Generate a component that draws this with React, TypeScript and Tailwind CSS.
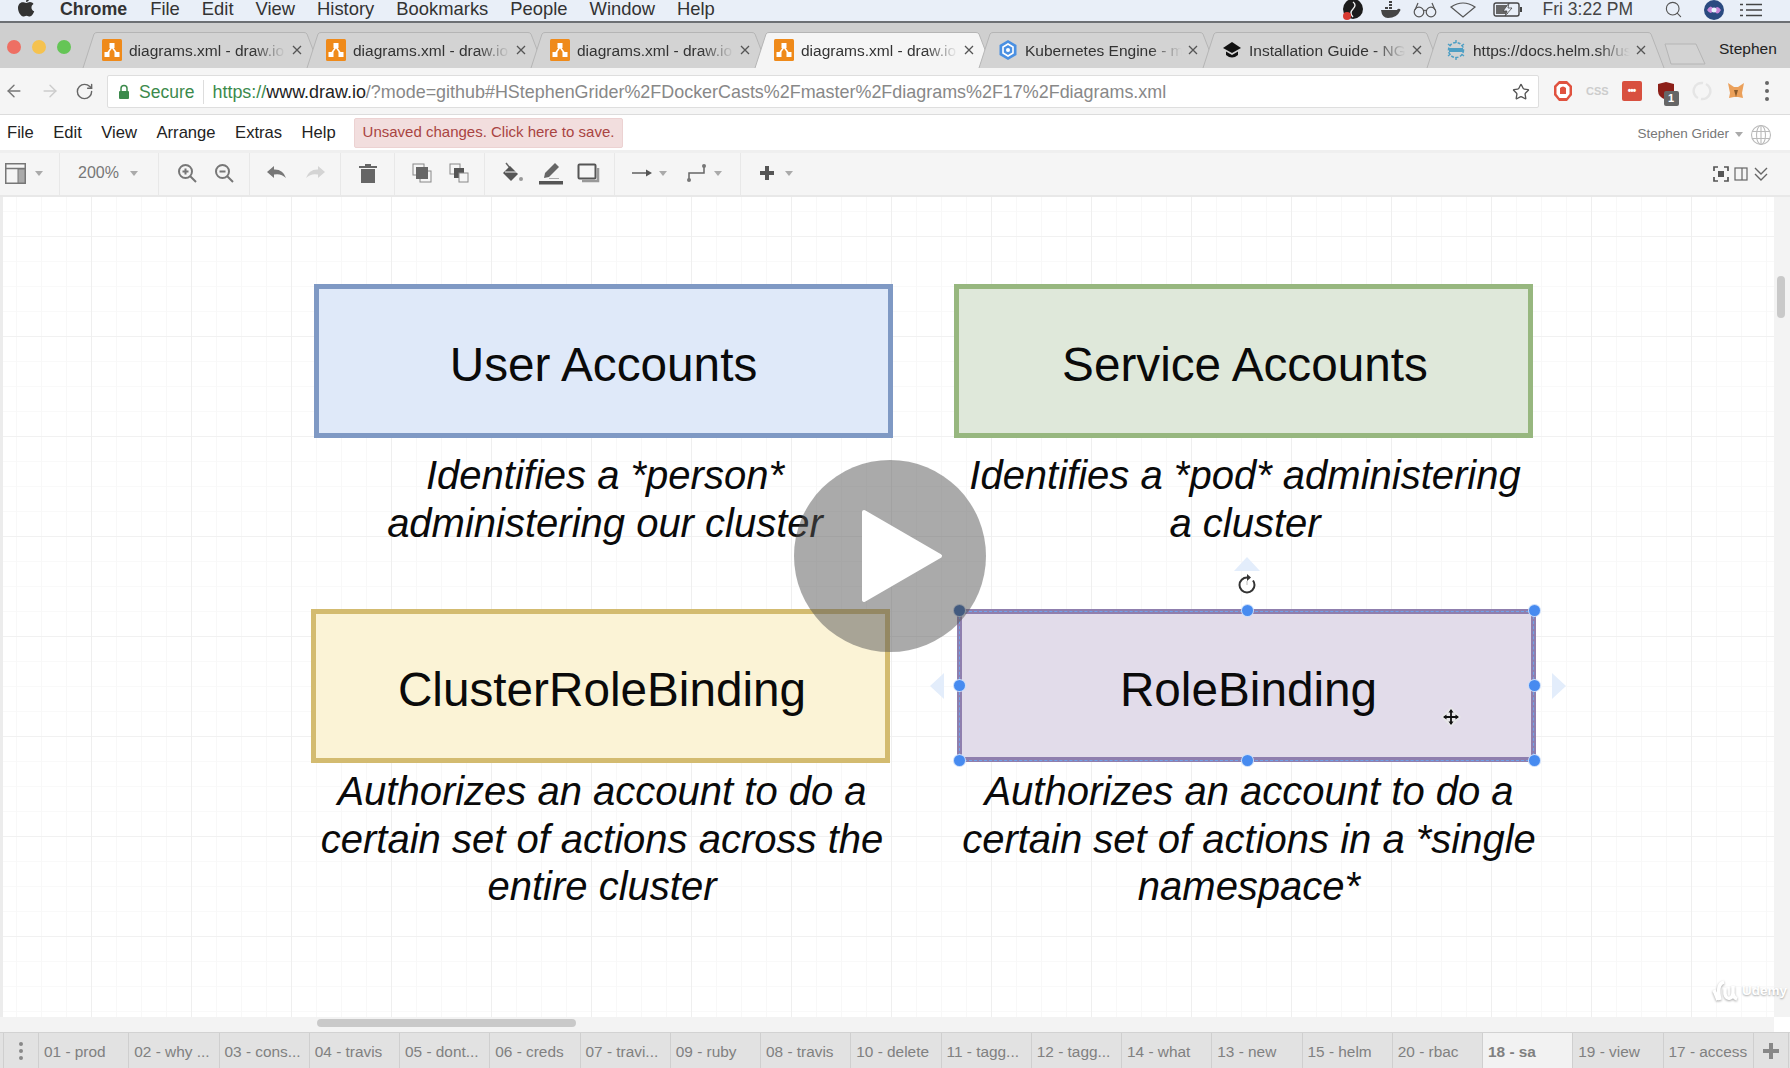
import { ArrowLeft, ArrowRight, RotateCw, Star, Search } from "lucide-react";

const macMenu = ["File", "Edit", "View", "History", "Bookmarks", "People", "Window", "Help"];
const appMenu = ["File", "Edit", "View", "Arrange", "Extras", "Help"];
const pages = [
    "01 - prod", "02 - why ...", "03 - cons...", "04 - travis", "05 - dont...", "06 - creds", "07 - travi...",
    "09 - ruby", "08 - travis", "10 - delete", "11 - tagg...", "12 - tagg...", "14 - what", "13 - new",
    "15 - helm", "20 - rbac", "18 - sa", "19 - view", "17 - access",
];

function DrawioIcon() {
    return (
        <svg width="20" height="22" viewBox="0 0 20 22" className="shrink-0">
            <rect width="20" height="22" rx="1.5" fill="#ef8a1a" />
            <path d="M10 8 L5 15 M10 8 L15 15" stroke="#fff" strokeWidth="1.5" />
            <rect x="7.5" y="4" width="5" height="5" fill="#fff" />
            <rect x="2.5" y="13" width="5" height="5" fill="#fff" />
            <rect x="12.5" y="13" width="5" height="5" fill="#fff" />
        </svg>
    );
}

function KubeIcon() {
    return (
        <svg width="20" height="22" viewBox="0 0 20 22" className="shrink-0">
            <path d="M10 1 L18.5 6 V16 L10 21 L1.5 16 V6 Z" fill="#4a90e2" />
            <path d="M10 5 L15 8 V14 L10 17 L5 14 V8 Z" fill="none" stroke="#fff" strokeWidth="1.6" />
            <circle cx="10" cy="11" r="2" fill="#fff" />
        </svg>
    );
}

function CapIcon() {
    return (
        <svg width="20" height="22" viewBox="0 0 20 22" className="shrink-0">
            <path d="M10 3 L19 9 L10 14 L1 9 Z" fill="#111" />
            <path d="M4 12.5 V16 Q10 21 16 16 V12.5 L10 16 Z" fill="#111" />
        </svg>
    );
}

function HelmIcon() {
    return (
        <svg width="20" height="22" viewBox="0 0 20 22" className="shrink-0">
            <circle cx="10" cy="11" r="7.5" fill="none" stroke="#4f9fc4" strokeWidth="1.5" strokeDasharray="3 1.6" />
            <path d="M10 1 V4 M10 18 V21 M2 5 L4.5 7 M18 5 L15.5 7 M2 17 L4.5 15 M18 17 L15.5 15" stroke="#4f9fc4" strokeWidth="1.4" />
            <rect x="3" y="9" width="14" height="4" fill="#4f9fc4" />
        </svg>
    );
}

function BrowserTab({ icon, title, active }: { icon: React.ReactNode; title: string; active?: boolean }) {
    return (
        <div className="relative flex h-[36px] w-[224px] shrink-0 items-center pl-[14px]">
            <svg width="250" height="36" viewBox="0 0 250 36" className="absolute left-[-6px] top-0">
                <path
                    d="M1 36 L12 2 Q13 0.5 15 0.5 H222 Q224 0.5 225 2 L238 36"
                    fill={active ? "#f5f5f5" : "#d3d3d3"}
                    stroke="#b5b5b5"
                />
            </svg>
            <div className="relative flex items-center gap-[7px]">
                {icon}
                <span className="relative top-[1px] w-[160px] overflow-hidden whitespace-nowrap text-[15.5px] text-[#333] [mask-image:linear-gradient(to_right,black_78%,transparent_98%)]">
                    {title}
                </span>
                <svg width="10" height="10" viewBox="0 0 10 10" className="ml-[-4px]">
                    <path d="M1 1 L9 9 M9 1 L1 9" stroke="#555" strokeWidth="1.3" />
                </svg>
            </div>
        </div>
    );
}

function Caret() {
    return <span className="block h-0 w-0 shrink-0 border-x-[4.5px] border-t-[5px] border-x-transparent border-t-[#aaa]" />;
}

function ToolGroup({ className, children }: { className: string; children: React.ReactNode }) {
    return <div className={"flex h-full items-center border-r border-[#e8e8e8] pb-[2px] " + className}>{children}</div>;
}

function Handle({ className, dark }: { className: string; dark?: boolean }) {
    return (
        <span
            className={
                "absolute z-10 h-[13px] w-[13px] rounded-full border border-white/70 " +
                (dark ? "bg-[#2f5fa8] " : "bg-[#478bf0] ") +
                className
            }
        />
    );
}

export default function App() {
    return (
        <div className="flex h-[1068px] w-[1790px] flex-col overflow-hidden bg-white font-['Liberation_Sans',sans-serif]">
            {/* Mac menu bar */}
            <div className="flex h-[23px] shrink-0 border-b-2 border-[#6d7074] bg-[#e9eff8] text-[18.4px] leading-none text-[#333]">
                <div className="relative flex h-[19px] items-center gap-[22px] pl-[60px]">
                    <svg width="18" height="22" viewBox="0 0 18 22" className="absolute left-[17px] top-[-3px]">
                        <path
                            d="M12.5 1 C12.6 3 11 5 9 5 C8.8 3.2 10.6 1.2 12.5 1 Z M9.2 6 C10.2 6 11.4 5.1 13 5.1 C14.3 5.1 15.7 5.8 16.5 7 C13.4 8.8 14 13 17.2 14.3 C16.4 16.6 14.6 19.5 12.8 19.5 C11.6 19.5 11 18.7 9.5 18.7 C8 18.7 7.4 19.5 6.2 19.5 C4 19.5 1 15 1 11 C1 7.6 3.2 5.3 5.6 5.3 C7 5.3 8.2 6 9.2 6 Z"
                            fill="#333"
                        />
                    </svg>
                    <span className="mr-[1px] text-[17.8px] font-bold">Chrome</span>
                    {macMenu.map((m) => (
                        <span key={m}>{m}</span>
                    ))}
                </div>
                <div className="ml-auto flex h-[19px] items-center pr-[28px]">
                    <svg width="22" height="22" viewBox="0 0 22 22" className="mr-[16px] shrink-0">
                        <circle cx="11" cy="10" r="10" fill="#1c1c1c" />
                        <path d="M11 3 Q15 6 11 10 Q7 14 11 18" stroke="#eee" strokeWidth="1.4" fill="none" />
                        <circle cx="5" cy="17" r="4" fill="#d83a32" />
                    </svg>
                    <svg width="22" height="18" viewBox="0 0 22 18" className="mr-[11px] shrink-0">
                        <path d="M1 9 H17 Q18 7 20 8 Q21 9 20 10 Q17 17 8 17 Q2 17 1 9 Z" fill="#444" />
                        <path d="M5 6 H8 V8 H5 Z M9 6 H12 V8 H9 Z M9 3 H12 V5 H9 Z M9 0 H12 V2 H9 Z" fill="#444" />
                    </svg>
                    <svg width="24" height="16" viewBox="0 0 24 16" className="mr-[13px] shrink-0">
                        <circle cx="6" cy="10" r="4.8" fill="none" stroke="#555" strokeWidth="1.2" />
                        <circle cx="18" cy="10" r="4.8" fill="none" stroke="#555" strokeWidth="1.2" />
                        <path d="M10 9 Q12 7.5 14 9 M2 8 L5 1 M22 8 L19 1" fill="none" stroke="#555" strokeWidth="1.2" />
                    </svg>
                    <svg width="26" height="16" viewBox="0 0 26 16" className="mr-[17px] shrink-0">
                        <path d="M1 5 Q13 -3 25 5 L13 15 Z" fill="none" stroke="#555" strokeWidth="1.2" />
                    </svg>
                    <svg width="30" height="16" viewBox="0 0 30 16" className="mr-[20px] shrink-0">
                        <rect x="1" y="1" width="25" height="13" rx="2" fill="none" stroke="#444" strokeWidth="1.4" />
                        <rect x="3" y="3" width="12" height="9" fill="#666" />
                        <rect x="27" y="5" width="2" height="5" fill="#444" />
                        <path d="M16 1 L10 9 H14 L12 14 L19 6 H15 Z" fill="#e9eff8" stroke="#444" strokeWidth="0.8" />
                    </svg>
                    <span className="mr-[31px] whitespace-nowrap text-[17.5px] text-[#444]">Fri 3:22 PM</span>
                    <Search size={19} strokeWidth={1.4} color="#555" className="mr-[21px] shrink-0" />
                    <svg width="20" height="20" viewBox="0 0 20 20" className="mr-[16px] shrink-0">
                        <circle cx="10" cy="10" r="10" fill="#2a4a80" />
                        <path d="M3 10 Q7 3 10 10 Q13 17 17 10 Q13 4 10 10 Q7 16 3 10 Z" fill="#c887d8" />
                        <circle cx="10" cy="10" r="2.5" fill="#e9f3ff" />
                    </svg>
                    <svg width="22" height="14" viewBox="0 0 22 14" className="shrink-0">
                        <path d="M0 1.5 H3 M6 1.5 H22 M0 7 H3 M6 7 H22 M0 12.5 H3 M6 12.5 H22" stroke="#444" strokeWidth="1.6" />
                    </svg>
                </div>
            </div>

            {/* Tab strip */}
            <div className="relative flex h-[45px] shrink-0 items-end bg-[#cfcfcf] pl-[88px]">
                <span className="absolute left-[7px] top-[17px] h-[14px] w-[14px] rounded-full bg-[#ee6f63]" />
                <span className="absolute left-[32px] top-[17px] h-[14px] w-[14px] rounded-full bg-[#f5c24f]" />
                <span className="absolute left-[57px] top-[17px] h-[14px] w-[14px] rounded-full bg-[#65c556]" />
                <BrowserTab icon={<DrawioIcon />} title="diagrams.xml - draw.io" />
                <BrowserTab icon={<DrawioIcon />} title="diagrams.xml - draw.io" />
                <BrowserTab icon={<DrawioIcon />} title="diagrams.xml - draw.io" />
                <BrowserTab icon={<DrawioIcon />} title="diagrams.xml - draw.io" active />
                <BrowserTab icon={<KubeIcon />} title="Kubernetes Engine - my" />
                <BrowserTab icon={<CapIcon />} title="Installation Guide - NGINX" />
                <BrowserTab icon={<HelmIcon />} title="https://docs.helm.sh/using" />
                <svg width="42" height="22" viewBox="0 0 42 22" className="absolute left-[1664px] top-[20px]">
                    <path d="M1 1 H32 L41 21 H7 Z" fill="#d3d3d3" stroke="#b5b5b5" />
                </svg>
                <span className="absolute left-[1719px] top-[14px] text-[15.5px] text-[#222]">Stephen</span>
            </div>

            {/* Address bar */}
            <div className="flex h-[47px] shrink-0 items-center border-b border-[#dcdcdc] bg-[#f5f5f5]">
                <ArrowLeft size={20} strokeWidth={1.7} color="#777" className="ml-[4px]" />
                <ArrowRight size={20} strokeWidth={1.7} color="#ccc" className="ml-[16px]" />
                <RotateCw size={19} strokeWidth={1.8} color="#666" className="ml-[15px]" />
                <div className="ml-[13px] flex h-[33px] w-[1432px] items-center rounded-[2px] border border-[#dedede] bg-white pt-[2px] text-[17.5px]">
                    <svg width="12" height="16" viewBox="0 0 12 16" className="ml-[10px]">
                        <path d="M3 7 V4.5 A3 3 0 0 1 9 4.5 V7" fill="none" stroke="#3c8a4c" strokeWidth="1.5" />
                        <rect x="1" y="7" width="10" height="8" rx="1" fill="#3c8a4c" />
                    </svg>
                    <span className="ml-[9px] text-[#3c8a4c]">Secure</span>
                    <span className="ml-[9px] h-[24px] w-px bg-[#ddd]" />
                    <span className="ml-[8px] whitespace-nowrap text-[17.93px] text-[#888]">
                        <span className="text-[#3c8a4c]">https://</span>
                        <span className="text-[#222]">www.draw.io</span>
                        /?mode=github#HStephenGrider%2FDockerCasts%2Fmaster%2Fdiagrams%2F17%2Fdiagrams.xml
                    </span>
                    <Star size={18} strokeWidth={1.8} color="#555" className="ml-auto mr-[8px]" />
                </div>
                <svg width="20" height="22" viewBox="0 0 20 22" className="ml-[14px]">
                    <path d="M6 1 H14 L19 6 V15 L14 21 H6 L1 15 V6 Z" fill="#e0523f" />
                    <path d="M6.5 4 H13.5 L16.5 7 V14 L13.5 18 H6.5 L3.5 14 V7 Z" fill="#fff" />
                    <path d="M7 14 V8 Q10 5 13 8 V14 Z" fill="#e0523f" />
                </svg>
                <span className="ml-[13px] text-[11px] font-bold text-[#ccc]">CSS</span>
                <span className="ml-[13px] flex h-[20px] w-[20px] items-center justify-center rounded-[2px] bg-[#d8503f] text-[10px] font-bold leading-none tracking-[-1px] text-white">
                    •••
                </span>
                <span className="relative ml-[14px] flex h-[20px] w-[20px] items-center justify-center">
                    <svg width="18" height="20" viewBox="0 0 18 20">
                        <path d="M9 1 L17 3 V10 Q17 16 9 19 Q1 16 1 10 V3 Z" fill="#8c1f18" />
                    </svg>
                    <span className="absolute left-[8px] top-[10px] flex h-[15px] w-[15px] items-center justify-center rounded-[2px] bg-[#666] text-[11px] font-bold leading-none text-white">
                        1
                    </span>
                </span>
                <svg width="20" height="20" viewBox="0 0 20 20" className="ml-[16px]">
                    <path d="M11 2 A8 8 0 0 0 6 17 M9 18 A8 8 0 0 0 14 3" fill="none" stroke="#e5e5e5" strokeWidth="2.5" />
                </svg>
                <svg width="18" height="18" viewBox="0 0 18 18" className="ml-[15px]">
                    <path d="M1 1 L7 5 H11 L17 1 L15 11 L16 16 L11 15 H7 L2 16 L3 11 Z" fill="#eba05a" />
                    <path d="M7 8 L9 15 L11 8 Z" fill="#8a5a2a" />
                </svg>
                <span className="ml-[20px] flex flex-col gap-[4px]">
                    <span className="h-[4px] w-[4px] rounded-full bg-[#666]" />
                    <span className="h-[4px] w-[4px] rounded-full bg-[#666]" />
                    <span className="h-[4px] w-[4px] rounded-full bg-[#666]" />
                </span>
            </div>

            {/* draw.io menu */}
            <div className="flex h-[38px] shrink-0 items-center border-b-[3px] border-[#efefef] bg-white pl-[7px] text-[16.6px] text-[#222]">
                <div className="flex w-[330px] gap-[19.5px] pt-[1px]">
                    {appMenu.map((m) => (
                        <span key={m}>{m}</span>
                    ))}
                </div>
                <div className="ml-[17px] flex h-[30px] w-[269px] items-center justify-center rounded-[2px] border border-[#ecd2d2] bg-[#f2dede] text-[15px] text-[#a94442]">
                    Unsaved changes. Click here to save.
                </div>
                <div className="ml-auto flex items-center pt-[4px]">
                    <span className="text-[13.5px] text-[#777]">Stephen Grider</span>
                    <span className="ml-[6px]">
                        <Caret />
                    </span>
                    <svg width="22" height="22" viewBox="0 0 22 22" className="ml-[7px] mr-[18px]">
                        <g fill="none" stroke="#bbb" strokeWidth="1.1">
                            <circle cx="11" cy="11" r="9.5" />
                            <ellipse cx="11" cy="11" rx="4.5" ry="9.5" />
                            <path d="M11 1.5 V20.5 M2 7.5 H20 M2 14.5 H20" />
                        </g>
                    </svg>
                </div>
            </div>

            {/* Toolbar */}
            <div className="flex h-[44px] shrink-0 items-center border-b-[2px] border-[#e8e8e8] bg-[#f5f5f5] text-[16px] text-[#777]">
                <ToolGroup className="w-[60px] gap-[9px] pl-[5px]">
                    <svg width="21" height="21" viewBox="0 0 21 21">
                        <rect x="0.75" y="0.75" width="19.5" height="19.5" fill="none" stroke="#777" strokeWidth="1.5" />
                        <path d="M0.75 5.5 H20.25" stroke="#777" strokeWidth="1.5" />
                        <rect x="13" y="6" width="7" height="14" fill="#aaa" stroke="#777" />
                    </svg>
                    <Caret />
                </ToolGroup>
                <ToolGroup className="w-[99px] gap-[11px] pl-[18px]">
                    <span>200%</span>
                    <Caret />
                </ToolGroup>
                <ToolGroup className="w-[91px] gap-[17px] pl-[18px]">
                    <svg width="20" height="20" viewBox="0 0 20 20" fill="none" stroke="#777" strokeWidth="2">
                        <circle cx="8.5" cy="8.5" r="6.5" />
                        <path d="M13 13 L19 19 M5.5 8.5 H11.5 M8.5 5.5 V11.5" />
                    </svg>
                    <svg width="20" height="20" viewBox="0 0 20 20" fill="none" stroke="#777" strokeWidth="2">
                        <circle cx="8.5" cy="8.5" r="6.5" />
                        <path d="M13 13 L19 19 M5.5 8.5 H11.5" />
                    </svg>
                </ToolGroup>
                <ToolGroup className="w-[91px] gap-[18px] pl-[17px]">
                    <svg width="20" height="14" viewBox="0 0 20 14">
                        <path d="M0 6 L7 0 V3.5 Q16 3 19 12 Q14 7 7 8.5 V12 Z" fill="#777" />
                    </svg>
                    <svg width="20" height="14" viewBox="0 0 20 14">
                        <path d="M20 6 L13 0 V3.5 Q4 3 1 12 Q6 7 13 8.5 V12 Z" fill="#d4d4d4" />
                    </svg>
                </ToolGroup>
                <ToolGroup className="w-[54px] justify-center">
                    <svg width="18" height="20" viewBox="0 0 18 20">
                        <path d="M0 3 H6 V1 H12 V3 H18 V5 H0 Z M2 6 H16 V20 H2 Z" fill="#666" />
                    </svg>
                </ToolGroup>
                <ToolGroup className="w-[90px] gap-[17px] pl-[17px]">
                    <svg width="20" height="20" viewBox="0 0 20 20">
                        <rect x="1" y="1" width="11" height="11" fill="none" stroke="#888" />
                        <rect x="8" y="8" width="11" height="11" fill="none" stroke="#888" />
                        <rect x="4" y="4" width="12" height="12" fill="#666" />
                    </svg>
                    <svg width="20" height="20" viewBox="0 0 20 20">
                        <rect x="1" y="1" width="10" height="10" fill="#f5f5f5" stroke="#888" />
                        <rect x="5" y="5" width="10" height="10" fill="#555" />
                        <rect x="10" y="10" width="9" height="9" fill="#f5f5f5" stroke="#888" />
                    </svg>
                </ToolGroup>
                <ToolGroup className="w-[130px] gap-[14px] pl-[16px]">
                    <svg width="24" height="22" viewBox="0 0 24 22">
                        <path d="M5 1 L9 6" stroke="#666" strokeWidth="1.5" />
                        <path d="M9 4 L17 12 L10 19 L2 11 Z" fill="#555" />
                        <path d="M4 10 H16" stroke="#f5f5f5" strokeWidth="1" />
                        <circle cx="20" cy="17" r="2" fill="#999" />
                    </svg>
                    <svg width="24" height="24" viewBox="0 0 24 24">
                        <path d="M6 12 L16 2 L20 6 L10 16 L5 17 Z" fill="#666" />
                        <rect x="0" y="20" width="24" height="3.5" fill="#555" />
                        <path d="M10 17.5 H20" stroke="#aaa" />
                    </svg>
                    <svg width="24" height="20" viewBox="0 0 24 20">
                        <rect x="1.5" y="1.5" width="17" height="14" rx="1" fill="none" stroke="#555" strokeWidth="2" />
                        <path d="M21 5 V18 H5" fill="none" stroke="#999" strokeWidth="2.5" />
                    </svg>
                </ToolGroup>
                <ToolGroup className="w-[126px] pl-[17px]">
                    <svg width="20" height="10" viewBox="0 0 20 10">
                        <path d="M0 5 H15" stroke="#555" strokeWidth="1.4" />
                        <path d="M14 1.5 L20 5 L14 8.5 Z" fill="#555" />
                    </svg>
                    <span className="ml-[7px]">
                        <Caret />
                    </span>
                    <svg width="20" height="20" viewBox="0 0 20 20" className="ml-[20px]">
                        <path d="M2 17 V10 H17 V3" fill="none" stroke="#666" strokeWidth="1.5" />
                        <circle cx="2" cy="17" r="2" fill="#777" />
                        <circle cx="17" cy="3" r="2" fill="#777" />
                    </svg>
                    <span className="ml-[7px]">
                        <Caret />
                    </span>
                </ToolGroup>
                <div className="flex items-center gap-[8px] pb-[2px] pl-[16px]">
                    <svg width="20" height="20" viewBox="0 0 20 20">
                        <path d="M8 3 H12 V8 H17 V12 H12 V17 H8 V12 H3 V8 H8 Z" fill="#555" />
                    </svg>
                    <Caret />
                </div>
                <div className="ml-auto flex items-center gap-[5px] pr-[21px]">
                    <svg width="16" height="16" viewBox="0 0 16 16" fill="none" stroke="#555" strokeWidth="1.7">
                        <path d="M1 5 V1 H5 M11 1 H15 V5 M15 11 V15 H11 M5 15 H1 V11" />
                        <rect x="5" y="5" width="6" height="6" fill="#555" stroke="none" />
                    </svg>
                    <svg width="14" height="14" viewBox="0 0 14 14" fill="none" stroke="#666" strokeWidth="1.2">
                        <rect x="1" y="1" width="12" height="12" />
                        <path d="M8 1 V13" />
                    </svg>
                    <svg width="16" height="16" viewBox="0 0 16 16" fill="none" stroke="#666" strokeWidth="1.4">
                        <path d="M2 2 L8 8 L14 2 M2 8 L8 14 L14 8" />
                    </svg>
                </div>
            </div>

            {/* Canvas area */}
            <div className="relative flex min-h-0 flex-1 flex-col">
                <div className="flex min-h-0 flex-1">
                    <div className="w-[3px] shrink-0 bg-[#ececec]" />
                    <div className="flex-1 bg-white bg-[linear-gradient(to_right,#efefef_1px,transparent_1px),linear-gradient(to_bottom,#f1f1f1_1px,transparent_1px),linear-gradient(to_right,#f8f8f8_1px,transparent_1px),linear-gradient(to_bottom,#f9f9f9_1px,transparent_1px)] bg-size-[100px_100px,100px_100px,25px_25px,25px_25px] bg-position-[88px_39px,88px_39px,13px_14px,13px_14px]" />
                    <div className="relative w-[16px] shrink-0 bg-[#f3f3f3]">
                        <span className="absolute left-[3px] top-[79px] h-[42px] w-[8px] rounded-full bg-[#c9c9c9]" />
                    </div>
                </div>
                <div className="flex h-[15px] shrink-0">
                    <div className="relative flex-1 bg-[#f3f3f3]">
                        <span className="absolute left-[317px] top-[2px] h-[8px] w-[259px] rounded-full bg-[#c9c9c9]" />
                    </div>
                    <div className="w-[16px] bg-white" />
                </div>

                {/* Diagram nodes */}
                <div className="absolute left-[314px] top-[87px] flex h-[154px] w-[579px] items-center justify-center border-[5px] border-[#7f99c4] bg-[#dfe9f9] pt-[7px] text-[47.7px] text-[#0a0a0a]">
                    <span className="whitespace-nowrap">User Accounts</span>
                </div>
                <div className="absolute left-[954px] top-[87px] flex h-[154px] w-[579px] items-center justify-center border-[5px] border-[#97b77f] bg-[#dfe8da] pl-[3px] pt-[7px] text-[47.7px] text-[#0a0a0a]">
                    <span className="whitespace-nowrap">Service Accounts</span>
                </div>
                <div className="absolute left-[311px] top-[412px] flex h-[154px] w-[579px] items-center justify-center border-[5px] border-[#d3bb70] bg-[#fbf3d6] pl-[3px] pt-[7px] text-[47.7px] text-[#0a0a0a]">
                    <span className="whitespace-nowrap">ClusterRoleBinding</span>
                </div>
                <div className="absolute left-[957px] top-[412px] flex h-[153px] w-[579px] items-center justify-center border-[5px] border-[#8f7fae] bg-[#e2dcea] pl-[4px] pt-[8px] text-[47.7px] text-[#0a0a0a]">
                    <span className="whitespace-nowrap">RoleBinding</span>
                </div>
                <div className="absolute left-[959px] top-[414px] h-[150px] w-[575px] border border-dashed border-[#6ea3ec]" />

                {/* Descriptions */}
                <p className="absolute left-[305px] top-[255px] w-[600px] whitespace-nowrap text-center text-[40px] italic leading-[47.5px] text-[#0a0a0a]">
                    Identifies a *person*
                    <br />
                    administering our cluster
                </p>
                <p className="absolute left-[945px] top-[255px] w-[600px] whitespace-nowrap text-center text-[40px] italic leading-[47.5px] text-[#0a0a0a]">
                    Identifies a *pod* administering
                    <br />a cluster
                </p>
                <p className="absolute left-[302px] top-[571px] w-[600px] whitespace-nowrap text-center text-[40px] italic leading-[47.5px] text-[#0a0a0a]">
                    Authorizes an account to do a
                    <br />
                    certain set of actions across the
                    <br />
                    entire cluster
                </p>
                <p className="absolute left-[949px] top-[571px] w-[600px] whitespace-nowrap text-center text-[40px] italic leading-[47.5px] text-[#0a0a0a]">
                    Authorizes an account to do a
                    <br />
                    certain set of actions in a *single
                    <br />
                    namespace*
                </p>

                {/* Selection handles */}
                <Handle dark className="left-[953px] top-[407px]" />
                <Handle className="left-[1241px] top-[407px]" />
                <Handle className="left-[1528px] top-[407px]" />
                <Handle className="left-[953px] top-[482px]" />
                <Handle className="left-[1528px] top-[482px]" />
                <Handle className="left-[953px] top-[557px]" />
                <Handle className="left-[1241px] top-[557px]" />
                <Handle className="left-[1528px] top-[557px]" />

                {/* Hover arrows */}
                <span className="absolute left-[1234px] top-[360px] h-0 w-0 border-x-[13px] border-b-[14px] border-x-transparent border-b-[#e3edfb]" />
                <span className="absolute left-[930px] top-[476px] h-0 w-0 border-y-[13px] border-r-[14px] border-y-transparent border-r-[#e3edfb]" />
                <span className="absolute left-[1552px] top-[476px] h-0 w-0 border-y-[13px] border-l-[14px] border-y-transparent border-l-[#e3edfb]" />

                {/* Rotate handle */}
                <svg width="20" height="22" viewBox="0 0 20 22" className="absolute left-[1237px] top-[376px]">
                    <circle cx="10" cy="12" r="7.5" fill="#fff" stroke="#333" strokeWidth="2" strokeDasharray="36 6" />
                    <path d="M10 1 L14 4.5 L10 8 Z" fill="#333" />
                    <path d="M10 8 V12" stroke="#bbb" />
                </svg>

                {/* Move cursor */}
                <svg width="20" height="20" viewBox="0 0 20 20" className="absolute left-[1441px] top-[510px]">
                    <path d="M10 0 L20 10 L10 20 L0 10 Z" fill="#e8e8e8" opacity="0.8" />
                    <path d="M10 3 V17 M3 10 H17" stroke="#111" strokeWidth="1.8" />
                    <path d="M10 2 L12.5 5.5 H7.5 Z M10 18 L12.5 14.5 H7.5 Z M2 10 L5.5 7.5 V12.5 Z M18 10 L14.5 7.5 V12.5 Z" fill="#111" />
                </svg>

                {/* Play overlay */}
                <div className="absolute left-[794px] top-[263px] z-20 flex h-[192px] w-[192px] items-center justify-center rounded-full bg-[#555]/50">
                    <svg width="82" height="94" viewBox="0 0 82 94" className="ml-[24px]">
                        <path d="M3 3 L79 47 L3 91 Z" fill="#fff" stroke="#fff" strokeWidth="4" strokeLinejoin="round" />
                    </svg>
                </div>

                {/* Watermark */}
                <div className="absolute left-[1712px] top-[783px] z-20 flex items-center gap-[4px] text-[13.5px] font-bold text-white [text-shadow:0_1px_2px_rgba(0,0,0,0.35)]">
                    <svg width="26" height="22" viewBox="0 0 26 22" fill="none" stroke="#fff" strokeWidth="3.5" className="drop-shadow-[0_1px_1px_rgba(0,0,0,0.35)]">
                        <path d="M2 10 L6 20 M8 20 Q4 4 12 2 M13 8 V14 Q14 19 18 18 Q21 17 21 12 V6 M21 14 Q22 18 25 19" />
                    </svg>
                    <span>Udemy</span>
                </div>
            </div>

            {/* Page tabs */}
            <div className="flex h-[36px] shrink-0 items-stretch border-t border-[#d2d2d2] bg-[#e2e2e2] pl-[3px] text-[15.4px] text-[#808080]">
                <div className="flex w-[36px] shrink-0 flex-col items-center justify-center gap-[3px] border-x border-[#cfcfcf]">
                    <span className="h-[4px] w-[4px] rounded-full bg-[#888]" />
                    <span className="h-[4px] w-[4px] rounded-full bg-[#888]" />
                    <span className="h-[4px] w-[4px] rounded-full bg-[#888]" />
                </div>
                {pages.map((p) => (
                    <div
                        key={p}
                        className={
                            "flex w-[90.25px] shrink-0 items-center whitespace-nowrap border-r border-[#cfcfcf] pl-[5px] pt-[2px] " +
                            (p === "18 - sa" ? "bg-[#f2f2f2] font-bold" : "")
                        }
                    >
                        {p}
                    </div>
                ))}
                <div className="flex w-[35px] shrink-0 items-center justify-center border-r border-[#cfcfcf]">
                    <svg width="18" height="18" viewBox="0 0 18 18">
                        <path d="M7 1 H11 V7 H17 V11 H11 V17 H7 V11 H1 V7 H7 Z" fill="#888" />
                    </svg>
                </div>
            </div>
        </div>
    );
}
